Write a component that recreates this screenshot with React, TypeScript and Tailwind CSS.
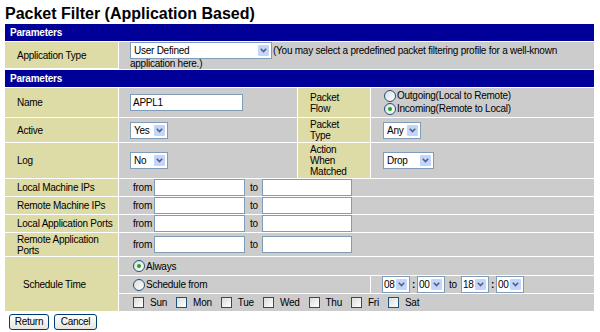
import React from "react";

const TAN = "bg-[#dddba6]";
const GRAY = "bg-[#cccccc]";

function Chevron() {
  return (
    <svg width="7" height="5" viewBox="0 0 7 5">
      <path d="M0.8 0.8 L3.5 3.6 L6.2 0.8" fill="none" stroke="#4d6185" strokeWidth="1.6" />
    </svg>
  );
}

function Select({ value, className, pad = "pl-[3px]" }: { value: string; className: string; pad?: string }) {
  return (
    <div className={`flex h-[17px] shrink-0 items-center border border-[#7f9db9] bg-white ${className}`}>
      <span className={`whitespace-nowrap leading-[15px] ${pad}`}>{value}</span>
      <span className="mr-px ml-auto flex h-[13px] w-[13px] shrink-0 items-center justify-center rounded-[2px] border border-white bg-[#c5d4fa]">
        <Chevron />
      </span>
    </div>
  );
}

function TextBox({ value, className }: { value?: string; className: string }) {
  return (
    <div className={`flex h-[17px] shrink-0 items-center border border-[#7f9db9] bg-white pl-[2px] ${className}`}>
      {value}
    </div>
  );
}

function Radio({ checked }: { checked?: boolean }) {
  return (
    <span className="flex h-[12px] w-[12px] shrink-0 items-center justify-center rounded-full border border-[#1c5180] bg-gradient-to-br from-[#dcdcd7] to-white">
      {checked && <span className="h-[4px] w-[4px] rounded-full bg-[#21a121]" />}
    </span>
  );
}

function Check() {
  return <span className="h-[11px] w-[11px] shrink-0 border border-[#1c5180] bg-gradient-to-br from-[#dcdcd7] to-white" />;
}

function Label({ children, className = "" }: { children: React.ReactNode; className?: string }) {
  return <div className={`${TAN} flex items-center pl-[12px] leading-[11px] ${className}`}>{children}</div>;
}

function Header() {
  return (
    <div className="col-span-4 flex h-[17px] items-center bg-[#000099] pl-[5px] font-bold text-white">Parameters</div>
  );
}

function RangeRow({ label, tall }: { label: React.ReactNode; tall?: boolean }) {
  return (
    <>
      <Label className={tall ? "h-[23px]" : "h-[17px]"}>{label}</Label>
      <div className={`${GRAY} col-span-3 flex items-center pl-[14px]`}>
        <span className="w-[21px]">from</span>
        <TextBox className="w-[91px]" />
        <span className="w-[17px] pl-[5px]">to</span>
        <TextBox className="w-[90px]" />
      </div>
    </>
  );
}

const days = ["Sun", "Mon", "Tue", "Wed", "Thu", "Fri", "Sat"];

export default function App() {
  return (
    <div className="h-[332px] w-[600px] bg-white px-[5px] font-['Liberation_Sans',Arial,sans-serif] text-[10px] tracking-[-0.25px] text-black">
      <h1 className="h-[24px] pt-[5px] text-[16px] font-bold leading-[18px] tracking-normal">
        Packet Filter (Application Based)
      </h1>

      <div className="grid grid-cols-[113px_178px_72px_223px] gap-px bg-white">
        <Header />

        <Label className="h-[26px]">Application Type</Label>
        <div className={`${GRAY} col-span-3 pl-[11px] leading-[10px]`}>
          <div className="flex items-center">
            <Select value="User Defined" className="w-[142px]" />
            <span className="ml-px">(You may select a predefined packet filtering profile for a well-known</span>
          </div>
          <div>application here.)</div>
        </div>

        <Header />

        <Label className="h-[29px]">Name</Label>
        <div className={`${GRAY} flex items-center pl-[11px]`}>
          <TextBox value="APPL1" className="w-[113px]" />
        </div>
        <Label>
          Packet
          <br />
          Flow
        </Label>
        <div className={`${GRAY} flex flex-col justify-center gap-px pl-[13px] leading-[12px]`}>
          <div className="flex items-center gap-px">
            <Radio />
            Outgoing(Local to Remote)
          </div>
          <div className="flex items-center gap-px">
            <Radio checked />
            Incoming(Remote to Local)
          </div>
        </div>

        <Label className="h-[24px]">Active</Label>
        <div className={`${GRAY} flex items-center pl-[11px]`}>
          <Select value="Yes" className="w-[38px]" />
        </div>
        <Label>
          Packet
          <br />
          Type
        </Label>
        <div className={`${GRAY} flex items-center pl-[12px]`}>
          <Select value="Any" className="w-[38px]" />
        </div>

        <Label className="h-[35px]">Log</Label>
        <div className={`${GRAY} flex items-center pl-[11px]`}>
          <Select value="No" className="w-[38px]" />
        </div>
        <Label>
          Action
          <br />
          When
          <br />
          Matched
        </Label>
        <div className={`${GRAY} flex items-center pl-[12px]`}>
          <Select value="Drop" className="w-[51px]" />
        </div>

        <RangeRow label="Local Machine IPs" />
        <RangeRow label="Remote Machine IPs" />
        <RangeRow label="Local Application Ports" />
        <RangeRow
          tall
          label={
            <>
              Remote Application
              <br />
              Ports
            </>
          }
        />

        <Label className="row-span-3 pl-[18px]">Schedule Time</Label>
        <div className={`${GRAY} col-span-3 flex h-[18px] items-center gap-px pl-[14px]`}>
          <Radio checked />
          Always
        </div>
        <div className={`${GRAY} col-span-2 flex h-[17px] items-center gap-px pl-[14px]`}>
          <Radio />
          Schedule from
        </div>
        <div className={`${GRAY} flex items-center pl-[11px]`}>
          <Select value="08" pad="pl-[1px]" className="w-[28px]" />
          <span className="w-[7px] text-center font-bold">:</span>
          <Select value="00" pad="pl-[1px]" className="w-[28px]" />
          <span className="w-[16px] text-center">to</span>
          <Select value="18" pad="pl-[1px]" className="w-[28px]" />
          <span className="w-[7px] text-center font-bold">:</span>
          <Select value="00" pad="pl-[1px]" className="w-[28px]" />
        </div>
        <div className={`${GRAY} col-span-3 flex h-[17px] items-center pl-[14px]`}>
          {days.map((d) => (
            <span key={d} className="mr-[9px] flex items-center">
              <Check />
              <span className="ml-[6px]">{d}</span>
            </span>
          ))}
        </div>
      </div>

      <div className="mt-[3px] flex gap-[5px] pl-[4px]">
        <button className="h-[16px] w-[40px] rounded-[3px] border border-[#003c74] bg-gradient-to-b from-white to-[#e6e5de] text-[10px] leading-[14px]">
          Return
        </button>
        <button className="h-[16px] w-[43px] rounded-[3px] border border-[#003c74] bg-gradient-to-b from-white to-[#e6e5de] text-[10px] leading-[14px]">
          Cancel
        </button>
      </div>
    </div>
  );
}
